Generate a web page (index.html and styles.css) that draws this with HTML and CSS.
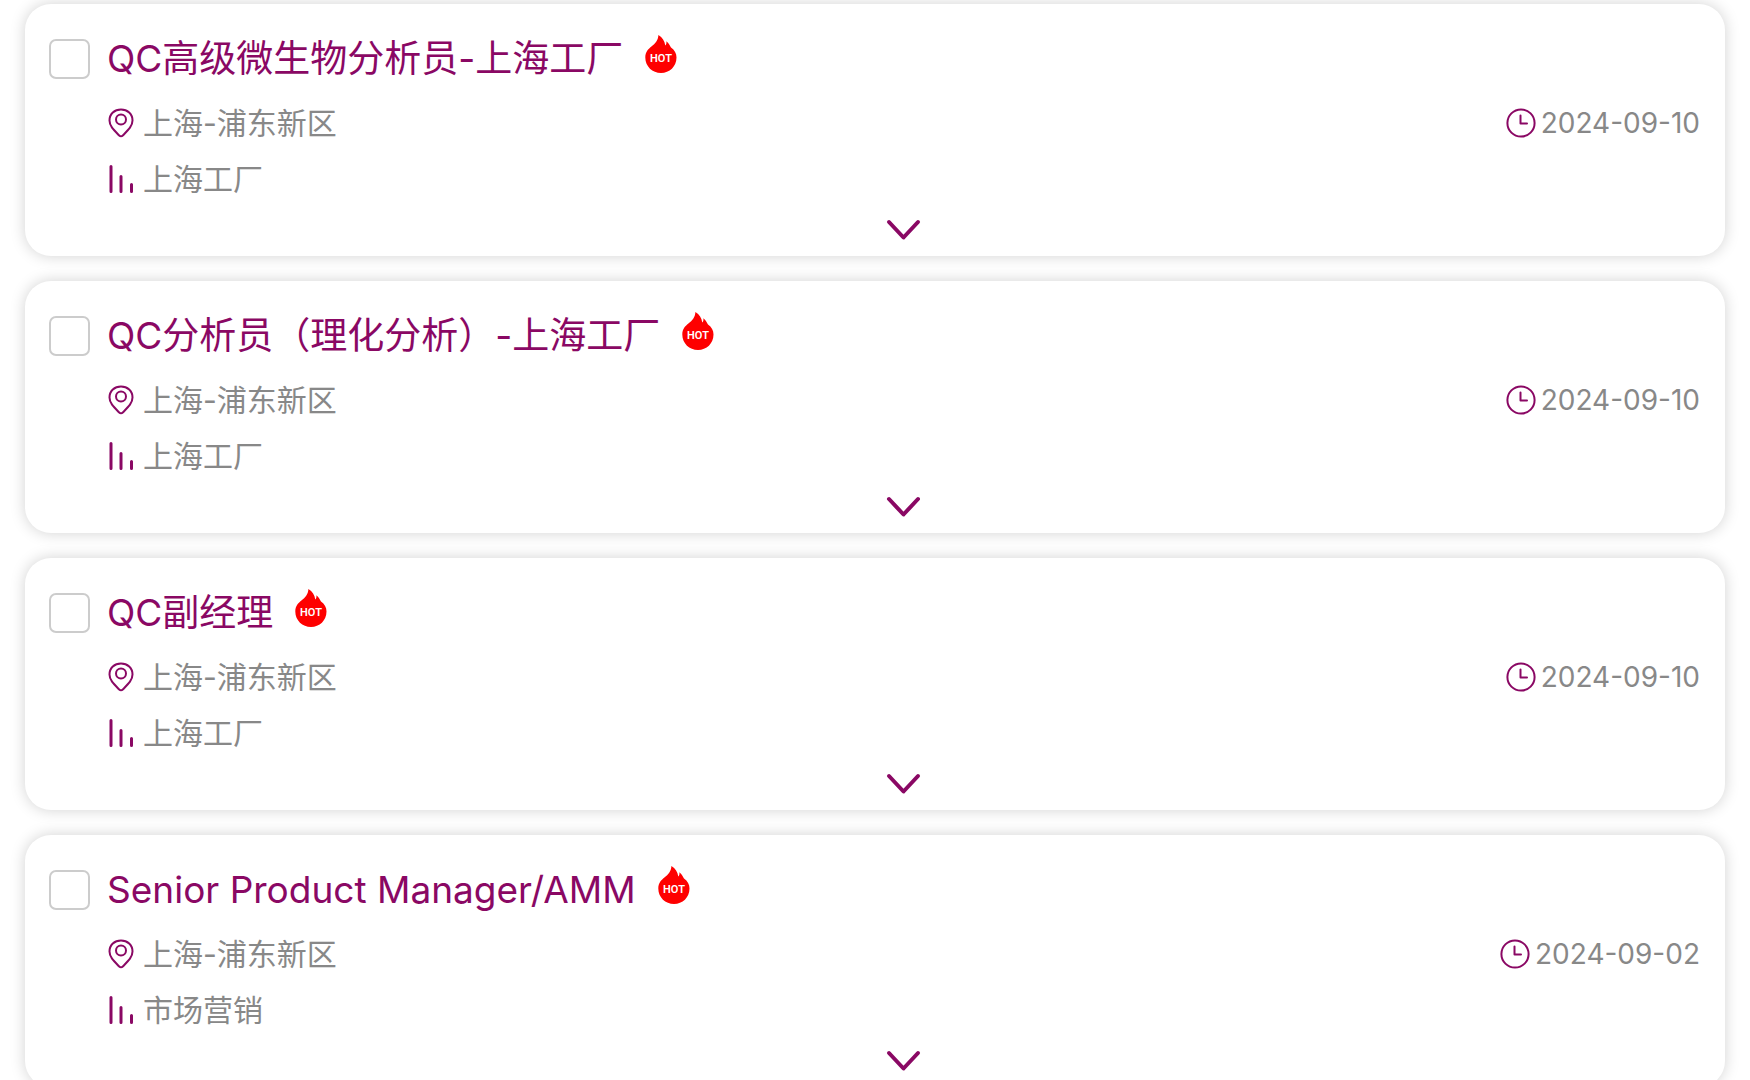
FILE: index.html
```
<!DOCTYPE html>
<html lang="zh-CN">
<head>
  <meta charset="utf-8">
  <meta name="viewport" content="width=device-width, initial-scale=1">
  <title>职位列表</title>
  <link rel="stylesheet" href="styles.css">
</head>
<body>
  <svg class="sprite" aria-hidden="true">
    <symbol id="hot" viewBox="0 0 34 40">
      <path d="M14.400 1C18.500 3.500 20.600 7 21.300 11.500C22.300 10.600 22.600 9.200 22.400 7.300C25.300 9.700 26 12 27 13.600C30.600 16 32.500 19.600 32.500 23.500C32.500 32.500 25.500 39 17 39C8.500 39 1.300 32.500 1.300 23.500C1.300 17.800 4.200 15.200 7.700 12.300C11 9.500 14.200 6.500 14.400 1Z" fill="#fe0000"/>
      <text x="17" y="28" text-anchor="middle" class="hot-text">HOT</text>
    </symbol>
    <symbol id="pin" viewBox="0 0 28 32">
      <path d="M14 29.300C13.300 29.300 12.700 29 12.200 28.500C6.500 22.800 2.500 19 2.500 13.500C2.500 7 7.500 2.500 14 2.500S25.500 7 25.500 13.500C25.500 19 21.500 22.800 15.800 28.500C15.300 29 14.700 29.300 14 29.300Z"/>
      <circle cx="14" cy="12.500" r="5"/>
    </symbol>
    <symbol id="bars" viewBox="0 0 28 32">
      <path d="M4 3.500V28.500M14 13.500V28.500M24.500 21.500V28.500" stroke-width="3"/>
    </symbol>
    <symbol id="clock" viewBox="0 0 32 32">
      <circle cx="16" cy="16" r="13.600"/>
      <path d="M15.500 8.500V16.500H22"/>
    </symbol>
    <symbol id="chevron" viewBox="0 0 40 28">
      <path d="M5 6L19.500 21.500L34 6" stroke-width="4"/>
    </symbol>
  </svg>

  <main class="job-list">
    <article class="job">
      <input class="job-check" type="checkbox" id="job1" aria-labelledby="title1">
      <div class="job-body">
        <div class="job-head">
          <h2 class="job-title" id="title1"><label for="job1">QC高级微生物分析员-上海工厂</label></h2>
          <svg class="hot-icon"><use href="#hot"/></svg>
        </div>
        <div class="job-row">
          <span class="meta"><svg class="icon"><use href="#pin"/></svg>上海-浦东新区</span>
          <span class="meta date"><svg class="icon icon-clock"><use href="#clock"/></svg><time datetime="2024-09-10">2024-09-10</time></span>
        </div>
        <div class="job-row">
          <span class="meta"><svg class="icon"><use href="#bars"/></svg>上海工厂</span>
        </div>
        <button class="job-more" type="button" aria-label="展开"><svg class="icon-chevron"><use href="#chevron"/></svg></button>
      </div>
    </article>

    <article class="job">
      <input class="job-check" type="checkbox" id="job2" aria-labelledby="title2">
      <div class="job-body">
        <div class="job-head">
          <h2 class="job-title" id="title2"><label for="job2">QC分析员（理化分析）-上海工厂</label></h2>
          <svg class="hot-icon"><use href="#hot"/></svg>
        </div>
        <div class="job-row">
          <span class="meta"><svg class="icon"><use href="#pin"/></svg>上海-浦东新区</span>
          <span class="meta date"><svg class="icon icon-clock"><use href="#clock"/></svg><time datetime="2024-09-10">2024-09-10</time></span>
        </div>
        <div class="job-row">
          <span class="meta"><svg class="icon"><use href="#bars"/></svg>上海工厂</span>
        </div>
        <button class="job-more" type="button" aria-label="展开"><svg class="icon-chevron"><use href="#chevron"/></svg></button>
      </div>
    </article>

    <article class="job">
      <input class="job-check" type="checkbox" id="job3" aria-labelledby="title3">
      <div class="job-body">
        <div class="job-head">
          <h2 class="job-title" id="title3"><label for="job3">QC副经理</label></h2>
          <svg class="hot-icon"><use href="#hot"/></svg>
        </div>
        <div class="job-row">
          <span class="meta"><svg class="icon"><use href="#pin"/></svg>上海-浦东新区</span>
          <span class="meta date"><svg class="icon icon-clock"><use href="#clock"/></svg><time datetime="2024-09-10">2024-09-10</time></span>
        </div>
        <div class="job-row">
          <span class="meta"><svg class="icon"><use href="#bars"/></svg>上海工厂</span>
        </div>
        <button class="job-more" type="button" aria-label="展开"><svg class="icon-chevron"><use href="#chevron"/></svg></button>
      </div>
    </article>

    <article class="job">
      <input class="job-check" type="checkbox" id="job4" aria-labelledby="title4">
      <div class="job-body">
        <div class="job-head">
          <h2 class="job-title" id="title4"><label for="job4">Senior Product Manager/AMM</label></h2>
          <svg class="hot-icon"><use href="#hot"/></svg>
        </div>
        <div class="job-row">
          <span class="meta"><svg class="icon"><use href="#pin"/></svg>上海-浦东新区</span>
          <span class="meta date"><svg class="icon icon-clock"><use href="#clock"/></svg><time datetime="2024-09-02">2024-09-02</time></span>
        </div>
        <div class="job-row">
          <span class="meta"><svg class="icon"><use href="#bars"/></svg>市场营销</span>
        </div>
        <button class="job-more" type="button" aria-label="展开"><svg class="icon-chevron"><use href="#chevron"/></svg></button>
      </div>
    </article>
  </main>
</body>
</html>
```
FILE: styles.css
```
:root {
  --brand: #8a0864;
  --muted: #888;
}

* {
  box-sizing: border-box;
}

body {
  margin: 0;
  background: #fff;
  color: var(--muted);
  font-family: Inter, "Noto Sans CJK SC", sans-serif;
}

.sprite {
  display: none;
}

.job-list {
  display: flex;
  flex-direction: column;
  gap: 25px;
  padding: 4px 25px;
}

.job {
  display: flex;
  align-items: flex-start;
  gap: 17px;
  padding: 30px 25px 4px 24px;
  border-radius: 26px;
  background: #fff;
  box-shadow: 0 0 15px rgba(0, 0, 0, 0.18);
}

.job-check {
  appearance: none;
  flex: none;
  width: 41px;
  height: 40px;
  margin: 5px 0 0;
  border: 2px solid #ccc;
  border-radius: 7px;
  background: #fff;
}

.job-check:checked {
  border-color: var(--brand);
  background: var(--brand);
}

.job-body {
  flex: 1;
  min-width: 0;
}

.job-head {
  display: flex;
  align-items: flex-start;
  gap: 21px;
  margin-bottom: 11px;
}

.job-title {
  margin: 0;
  color: var(--brand);
  font-size: 37px;
  font-weight: 400;
  line-height: 50px;
}

.hot-icon {
  flex: none;
  width: 34px;
  height: 40px;
}

.hot-text {
  fill: #fff;
  font-family: Roboto, sans-serif;
  font-size: 11px;
  font-weight: 600;
}

.job-row {
  display: flex;
  justify-content: space-between;
}

.meta {
  display: flex;
  align-items: center;
  gap: 8px;
  font-size: 30px;
  line-height: 56px;
}

.date {
  gap: 4px;
  font-size: 28px;
}

.icon {
  flex: none;
  width: 28px;
  height: 32px;
  fill: none;
  stroke: var(--brand);
  stroke-width: 2;
  stroke-linecap: round;
  stroke-linejoin: round;
}

.icon-clock {
  width: 32px;
}

.job-more {
  display: flex;
  align-items: center;
  justify-content: center;
  width: 100%;
  height: 45px;
  padding: 0;
  border: 0;
  background: none;
  cursor: pointer;
}

.icon-chevron {
  width: 40px;
  height: 28px;
  fill: none;
  stroke: var(--brand);
  stroke-linecap: round;
  stroke-linejoin: round;
}
```
